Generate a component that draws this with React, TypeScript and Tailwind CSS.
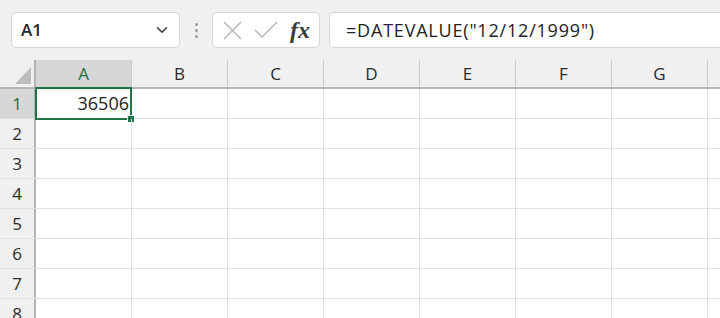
import { ChevronDown } from "lucide-react";

const cols = ["A", "B", "C", "D", "E", "F", "G", "H"];
const rows = [1, 2, 3, 4, 5, 6, 7, 8];

function FormulaBar() {
  return (
    <div className="flex h-[60px] items-center bg-[#f0f0f0] pl-[11px] overflow-hidden">
      {/* name box */}
      <div className="flex h-[36px] w-[169px] shrink-0 items-center justify-between rounded-[5px] border border-[#d6d6d6] bg-white pl-[9px] pr-[8px]">
        <span className="text-[17px] font-semibold text-[#262626]">A1</span>
        <ChevronDown size={18} strokeWidth={2} className="text-[#3a3a3a]" />
      </div>

      {/* grip dots */}
      <div className="flex w-[32px] shrink-0 flex-col items-center gap-[3px]">
        <span className="h-[3px] w-[3px] rounded-full bg-[#9a9a9a]" />
        <span className="h-[3px] w-[3px] rounded-full bg-[#9a9a9a]" />
        <span className="h-[3px] w-[3px] rounded-full bg-[#9a9a9a]" />
      </div>

      {/* cancel / enter / fx */}
      <div className="flex h-[36px] w-[108px] shrink-0 items-center rounded-[5px] border border-[#d6d6d6] bg-white pl-[9px]">
        <svg width="21" height="21" viewBox="0 0 21 21" className="shrink-0">
          <path d="M2 2 L19 19 M19 2 L2 19" stroke="#b4b4b4" strokeWidth="1.4" fill="none" />
        </svg>
        <svg width="24" height="18" viewBox="0 0 24 18" className="ml-[11px] shrink-0">
          <path d="M1 9 L8 16 L23 1" stroke="#b4b4b4" strokeWidth="1.4" fill="none" />
        </svg>
        <span className="ml-[12px] font-['Liberation_Serif',serif] text-[24px] font-bold italic leading-none text-[#3c3c3c]">
          fx
        </span>
      </div>

      {/* formula input */}
      <div className="ml-[9px] flex h-[36px] w-[420px] shrink-0 items-center rounded-l-[5px] border border-[#d6d6d6] bg-white pl-[16px]">
        <span className="text-[18px] tracking-[0.8px] text-[#222222]">=DATEVALUE("12/12/1999")</span>
      </div>
    </div>
  );
}

function Sheet() {
  return (
    <div className="bg-white">
      {/* column header */}
      <div className="flex h-[29px] border-b-2 border-[#b5b5b5] bg-[#f0f0f0]">
        <div className="relative w-[36px] shrink-0 border-r-2 border-[#b5b5b5]">
          <svg width="16" height="17" viewBox="0 0 16 17" className="absolute bottom-[3px] right-[3px]">
            <path d="M16 0 L16 17 L0 17 Z" fill="#bdbdbd" />
          </svg>
        </div>
        {cols.map((c, i) => (
          <div
            key={c}
            className={`flex w-[96px] shrink-0 items-center justify-center border-r border-[#c9c9c9] text-[17px] ${
              i === 0 ? "bg-[#d6d6d6] text-[#1e6e42]" : "text-[#2a2a2a]"
            }`}
          >
            {c}
          </div>
        ))}
      </div>

      {rows.map((r) => (
        <div key={r} className="flex h-[30px] border-b border-[#e1e1e1]">
          <div
            className={`flex w-[36px] shrink-0 items-center justify-center border-r-2 border-[#b5b5b5] text-[17px] ${
              r === 1 ? "bg-[#d6d6d6] text-[#1e6e42]" : "bg-[#f0f0f0] text-[#2a2a2a]"
            }`}
          >
            {r}
          </div>
          {cols.map((c, i) => (
            <div key={c} className="relative w-[96px] shrink-0 border-r border-[#e1e1e1]">
              {r === 1 && i === 0 && (
                <div className="absolute -left-[1px] -top-[2px] -bottom-[2px] -right-[1px] flex items-center justify-end border-2 border-[#217346] pr-[1px] text-[18px] text-[#222222]">
                  36506
                  <span className="absolute -bottom-[5px] -right-[5px] h-[8px] w-[8px] border border-white bg-[#217346]" />
                </div>
              )}
            </div>
          ))}
        </div>
      ))}
    </div>
  );
}

export default function App() {
  return (
    <div className="h-[318px] w-[720px] overflow-hidden font-['Open_Sans','Noto_Sans',sans-serif]">
      <FormulaBar />
      <Sheet />
    </div>
  );
}
